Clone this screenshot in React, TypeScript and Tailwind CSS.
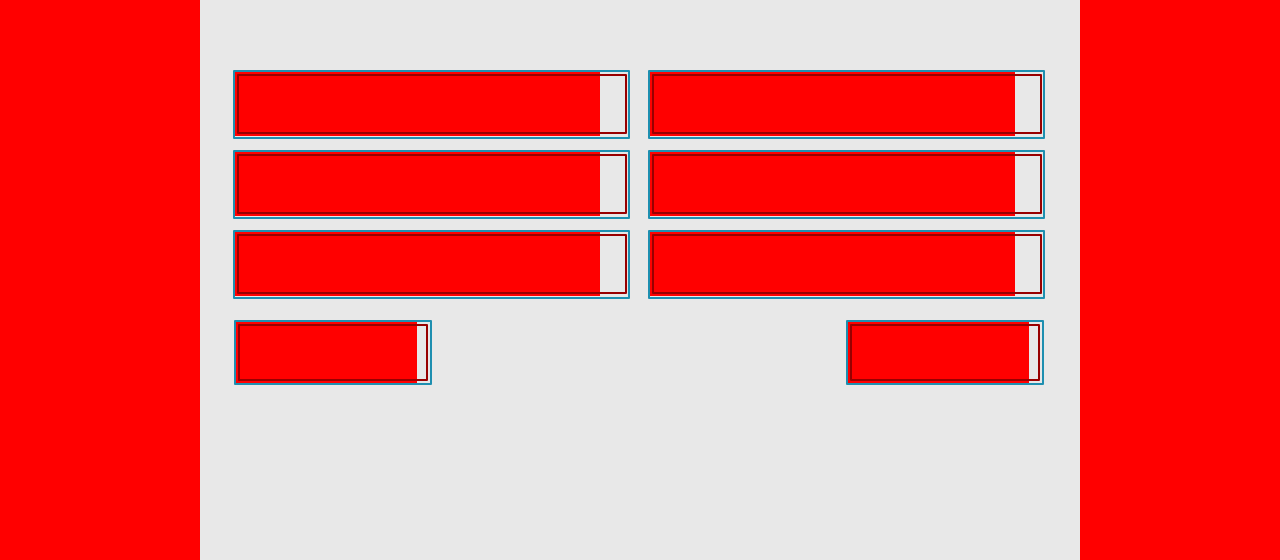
const tiles = ['Option 1', 'Option 2', 'Option 3', 'Option 4', 'Option 5', 'Option 6'];

function Tile({ label }: { label: string }) {
  return (
    <button
      type="button"
      aria-label={label}
      className="grid h-[69px] w-full rounded-[1px] border-2 border-[#1e8fb0]"
    >
      <span className="col-start-1 row-start-1 mb-px h-16 w-[93%] bg-[#ff0000]" />
      <span className="col-start-1 row-start-1 mt-0.5 mr-px mb-[3px] ml-0.5 h-[60px] rounded-[1px] border-2 border-[#980000]" />
    </button>
  );
}

function ActionButton({ label }: { label: string }) {
  return (
    <button
      type="button"
      aria-label={label}
      className="grid h-[65px] w-[198px] rounded-[1px] border-2 border-[#1e8fb0]"
    >
      <span className="col-start-1 row-start-1 h-[61px] w-[181px] bg-[#ff0000]" />
      <span className="col-start-1 row-start-1 m-0.5 h-[57px] rounded-[1px] border-2 border-[#980000]" />
    </button>
  );
}

export default function App() {
  return (
    <div className="min-h-screen bg-[#ff0000] font-['Liberation_Sans',sans-serif]">
      <main className="mx-auto min-h-screen max-w-[880px] bg-[#e8e8e8] pt-[70px] pr-[35px] pl-[33px]">
        <div className="grid grid-cols-2 gap-x-[18px] gap-y-[11px]">
          {tiles.map((label) => (
            <Tile key={label} label={label} />
          ))}
        </div>
        <div className="mt-[21px] flex justify-between px-px">
          <ActionButton label="Previous" />
          <ActionButton label="Next" />
        </div>
      </main>
    </div>
  );
}
